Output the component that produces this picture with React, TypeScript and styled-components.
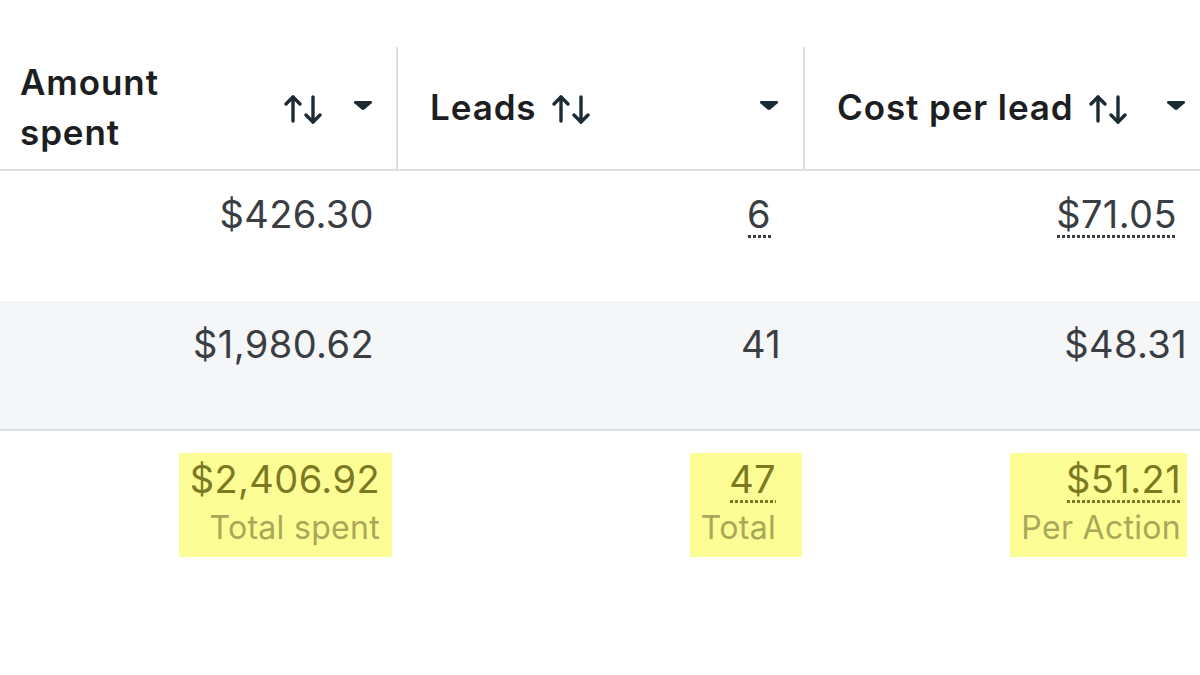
import React from 'react';
import styled, { createGlobalStyle } from 'styled-components';

const GlobalStyle = createGlobalStyle`
  html, body {
    margin: 0;
    padding: 0;
    background: #ffffff;
  }
  body {
    font-family: Inter, "Noto Sans", sans-serif;
    color: #1c1e21;
    overflow: hidden;
  }
`;

const Page = styled.div`
  width: 1200px;
  height: 675px;
  padding-top: 47px;
  box-sizing: border-box;
  overflow: hidden;
`;

const Table = styled.div`
  display: grid;
  grid-template-columns: 396px 407px 397px;
`;

const HeaderCell = styled.div<{ $first?: boolean; $padRight: number }>`
  display: flex;
  align-items: center;
  height: 124px;
  padding-left: ${p => (p.$first ? 20 : 32)}px;
  padding-right: ${p => p.$padRight}px;
  border-left: ${p => (p.$first ? 'none' : '2px solid #dcdfe3')};
  border-bottom: 2px solid #dcdfe3;
  box-sizing: border-box;
`;

const Label = styled.span<{ $width?: number }>`
  flex: ${p => (p.$width ? `0 0 ${p.$width}px` : '0 1 auto')};
  box-sizing: border-box;
  padding-right: ${p => (p.$width ? 90 : 0)}px;
  font-size: 35px;
  font-weight: 600;
  line-height: 50px;
  letter-spacing: 0.9px;
  color: #1c1e21;
  padding-bottom: 2px;
`;

const SortIcon = styled.svg`
  flex: none;
  width: 40px;
  height: 30px;
  margin-left: 14px;
  margin-top: 2px;
`;

const Spacer = styled.div`
  flex: 1;
  min-width: 30px;
`;

const Caret = styled.svg`
  flex: none;
  width: 20px;
  height: 11px;
  margin-top: -6px;
`;

const BodyCell = styled.div<{ $shaded?: boolean; $padRight: number; $last?: boolean }>`
  display: flex;
  justify-content: flex-end;
  align-items: flex-start;
  height: 130px;
  padding: 22px ${p => p.$padRight}px 0 0;
  box-sizing: border-box;
  background: ${p => (p.$shaded ? '#f5f6f7' : '#ffffff')};
  border-bottom: ${p => (p.$last ? '2px solid #dcdfe3' : 'none')};
`;

const Value = styled.span<{ $dotted?: boolean }>`
  font-size: 38px;
  font-weight: 400;
  line-height: 42px;
  letter-spacing: 0.4px;
  color: #3a3d42;
  padding-bottom: 3px;
  ${p =>
    p.$dotted
      ? `
    background-image: linear-gradient(to right, #3a3d42 55%, transparent 55%);
    background-size: 5px 3px;
    background-repeat: repeat-x;
    background-position: 1px 100%;
    margin-right: 10px;
  `
      : ''}
`;

const FooterCell = styled.div<{ $padRight: number }>`
  display: flex;
  justify-content: flex-end;
  align-items: flex-start;
  padding: 22px ${p => p.$padRight}px 0 0;
  height: 245px;
  box-sizing: border-box;
`;

const Highlight = styled.div<{ $padRight: number }>`
  display: flex;
  flex-direction: column;
  align-items: flex-end;
  background: #fdfd96;
  padding: 5px ${p => p.$padRight}px 6px 11px;
`;

const TotalValue = styled(Value)`
  color: #7b7a22;
  ${p =>
    p.$dotted
      ? `
    background-image: linear-gradient(to right, #7b7a22 55%, transparent 55%);
    margin-right: 0;
  `
      : ''}
`;

const TotalLabel = styled.span`
  font-size: 32px;
  line-height: 46px;
  letter-spacing: 0.3px;
  color: #a9a858;
  margin-top: 2px;
`;

const Sort = () => (
  <SortIcon viewBox="0 0 40 30" fill="none" stroke="#1c2b33" strokeWidth={3.4} strokeLinecap="round" strokeLinejoin="round">
    <path d="M10 27V3" />
    <path d="M3 10L10 3L17 10" />
    <path d="M30 3V28" />
    <path d="M23 21L30 28L37 21" />
  </SortIcon>
);

const Down = () => (
  <Caret viewBox="0 0 20 11">
    <path d="M2.4 1H17.6C19 1 19.6 2.4 18.6 3.3L11.3 9.6C10.6 10.2 9.4 10.2 8.7 9.6L1.4 3.3C0.4 2.4 1 1 2.4 1Z" fill="#1c2b33" />
  </Caret>
);

type Column = {
  title: string;
  labelWidth?: number;
  headPad: number;
  bodyPad: number;
  footPad: number;
  boxPad: number;
  rows: { text: string; dotted?: boolean }[];
  total: { text: string; label: string; dotted?: boolean };
};

const columns: Column[] = [
  {
    title: 'Amount spent',
    labelWidth: 249,
    headPad: 24,
    bodyPad: 22,
    footPad: 4,
    boxPad: 12,
    rows: [{ text: '$426.30' }, { text: '$1,980.62' }],
    total: { text: '$2,406.92', label: 'Total spent' },
  },
  {
    title: 'Leads',
    headPad: 24,
    bodyPad: 22,
    footPad: 1,
    boxPad: 26,
    rows: [{ text: '6', dotted: true }, { text: '41' }],
    total: { text: '47', label: 'Total', dotted: true },
  },
  {
    title: 'Cost per lead',
    headPad: 14,
    bodyPad: 13,
    footPad: 13,
    boxPad: 6,
    rows: [{ text: '$71.05', dotted: true }, { text: '$48.31' }],
    total: { text: '$51.21', label: 'Per Action', dotted: true },
  },
];

export default function App() {
  return (
    <>
      <GlobalStyle />
      <Page>
        <Table>
          {columns.map((c, i) => (
            <HeaderCell key={c.title} $first={i === 0} $padRight={c.headPad}>
              <Label $width={c.labelWidth}>{c.title}</Label>
              <Sort />
              <Spacer />
              <Down />
            </HeaderCell>
          ))}
          {columns.map(c => (
            <BodyCell key={c.title + '-0'} $padRight={c.bodyPad}>
              <Value $dotted={c.rows[0].dotted}>{c.rows[0].text}</Value>
            </BodyCell>
          ))}
          {columns.map(c => (
            <BodyCell key={c.title + '-1'} $shaded $last $padRight={c.bodyPad}>
              <Value $dotted={c.rows[1].dotted}>{c.rows[1].text}</Value>
            </BodyCell>
          ))}
          {columns.map(c => (
            <FooterCell key={c.title + '-t'} $padRight={c.footPad}>
              <Highlight $padRight={c.boxPad}>
                <TotalValue $dotted={c.total.dotted}>{c.total.text}</TotalValue>
                <TotalLabel>{c.total.label}</TotalLabel>
              </Highlight>
            </FooterCell>
          ))}
        </Table>
      </Page>
    </>
  );
}
